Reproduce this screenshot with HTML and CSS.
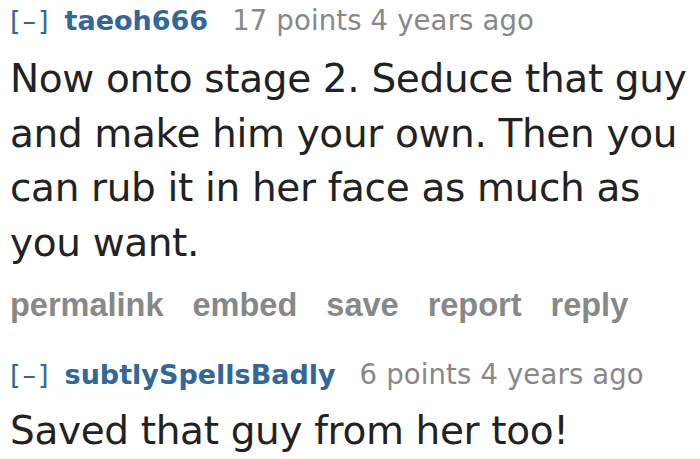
FILE: index.html
```html
<!DOCTYPE html>
<html>
<head>
<meta charset="utf-8">
<link rel="stylesheet" href="styles.css">
</head>
<body>
<div class="comment">
  <div class="tagline"><span class="expand">[–]</span><span class="author">taeoh666</span><span class="meta">17 points 4 years ago</span></div>
  <div class="body">Now onto stage 2. Seduce that guy and make him your own. Then you can rub it in her face as much as you want.</div>
  <ul class="buttons"><li>permalink</li><li>embed</li><li>save</li><li>report</li><li>reply</li></ul>
</div>
<div class="comment second">
  <div class="tagline"><span class="expand">[–]</span><span class="author">subtlySpellsBadly</span><span class="meta">6 points 4 years ago</span></div>
  <div class="body">Saved that guy from her too!</div>
</div>
</body>
</html>
```
FILE: styles.css
```css
html, body { margin: 0; padding: 0; background: #fff; }
body { font-family: "DejaVu Sans", Verdana, sans-serif; overflow: hidden; }
.comment { padding-left: 10px; }
.second { margin-top: 29px; }
.tagline { font-size: 27px; line-height: 40px; color: #888; white-space: nowrap; }
.expand { color: #369; font-weight: normal; letter-spacing: 2px; }
.author { color: #336699; font-weight: bold; margin-left: 14px; margin-right: 24px; }
.meta { font-size: 27.5px; letter-spacing: 0.15px; }
.body { font-size: 39px; line-height: 54.5px; letter-spacing: -0.35px; color: #222; margin-top: 11px; width: 690px; }
.second .body { margin-top: 9px; }
.buttons { list-style: none; margin: 15px 0 0; padding: 0; display: flex; gap: 29px; font-family: "Liberation Sans", Arial, sans-serif; font-weight: bold; font-size: 32.5px; line-height: 40px; color: #888; }
```
